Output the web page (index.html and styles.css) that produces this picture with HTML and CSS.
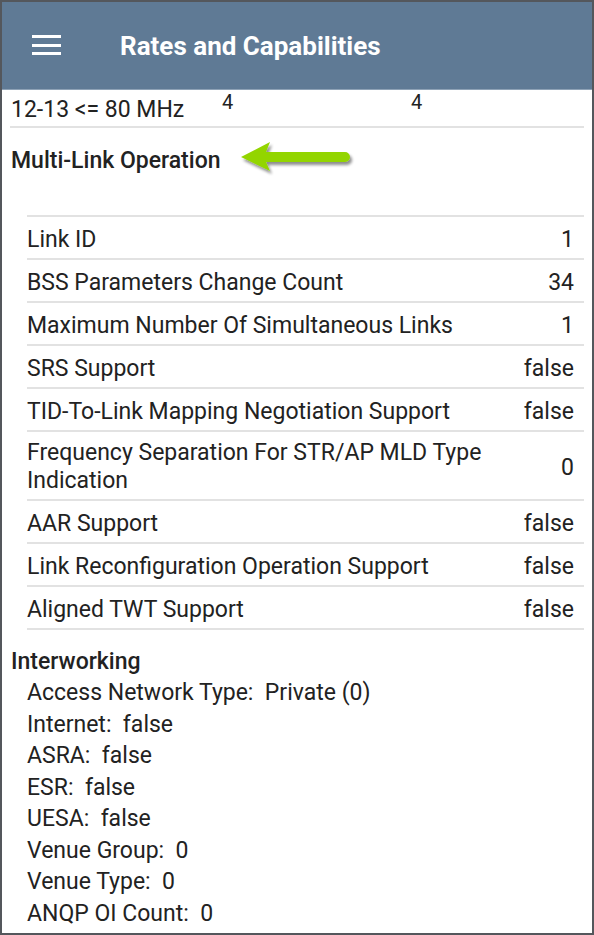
FILE: index.html
```html
<!DOCTYPE html>
<html>
<head>
<meta charset="utf-8">
<link rel="stylesheet" href="styles.css">
</head>
<body>
<div class="frame">
  <header class="appbar">
    <div class="menu"><span></span><span></span><span></span></div>
    <h1 class="title">Rates and Capabilities</h1>
  </header>
  <main class="content">
    <div class="clip-row">
      <span class="clip-label">12-13 &lt;= 80 MHz</span>
      <span class="clip-val">4</span>
      <span class="clip-val">4</span>
    </div>
    <div class="section-head">
      <span>Multi-Link Operation</span>
    </div>
    <div class="table">
      <div class="row"><span>Link ID</span><span>1</span></div>
      <div class="row"><span>BSS Parameters Change Count</span><span>34</span></div>
      <div class="row"><span>Maximum Number Of Simultaneous Links</span><span>1</span></div>
      <div class="row"><span>SRS Support</span><span>false</span></div>
      <div class="row"><span>TID-To-Link Mapping Negotiation Support</span><span>false</span></div>
      <div class="row tall"><span class="wrap">Frequency Separation For STR/AP MLD Type Indication</span><span>0</span></div>
      <div class="row"><span>AAR Support</span><span>false</span></div>
      <div class="row"><span>Link Reconfiguration Operation Support</span><span>false</span></div>
      <div class="row"><span>Aligned TWT Support</span><span>false</span></div>
    </div>
    <div class="inter">
      <div class="inter-head">Interworking</div>
      <ul class="kv">
        <li>Access Network Type:&nbsp; Private (0)</li>
        <li>Internet:&nbsp; false</li>
        <li>ASRA:&nbsp; false</li>
        <li>ESR:&nbsp; false</li>
        <li>UESA:&nbsp; false</li>
        <li>Venue Group:&nbsp; 0</li>
        <li>Venue Type:&nbsp; 0</li>
        <li>ANQP OI Count:&nbsp; 0</li>
      </ul>
    </div>
    <svg class="arrow" width="120" height="44" viewBox="0 0 120 44">
      <defs>
        <filter id="sh" x="-20%" y="-40%" width="140%" height="180%">
          <feGaussianBlur in="SourceAlpha" stdDeviation="1.5"/>
          <feOffset dx="2" dy="3" result="b"/>
          <feComponentTransfer><feFuncA type="linear" slope="0.45"/></feComponentTransfer>
          <feMerge><feMergeNode/><feMergeNode in="SourceGraphic"/></feMerge>
        </filter>
      </defs>
      <g filter="url(#sh)">
        <path d="M2 18 L31 3 L27 13 L106 13 A5 5 0 0 1 106 23 L27 23 L31 32 Z" fill="#93d500"/>
      </g>
    </svg>
  </main>
</div>
</body>
</html>
```

FILE: styles.css
```css
* { box-sizing: border-box; }
html, body { margin: 0; padding: 0; background: #fff; }
body { font-family: Roboto, "Noto Sans", sans-serif; color: #222; }
.frame {
  width: 594px;
  height: 935px;
  border: 2px solid #54575c;
  overflow: hidden;
  display: flex;
  flex-direction: column;
  background: #fff;
}
.appbar {
  height: 88px;
  flex: none;
  background: #5f7a95;
  display: flex;
  align-items: center;
  padding-left: 30px;
  border-bottom: 1px solid #8ea2b6;
  position: relative;
  z-index: 2;
}
.menu {
  width: 29px;
  display: flex;
  flex-direction: column;
  gap: 5.5px;
  margin-top: -1px;
}
.menu span { display: block; height: 3px; background: #fff; }
.title {
  margin: 0 0 0 59px;
  font-size: 26px;
  font-weight: 700;
  color: #fff;
  letter-spacing: 0;
}
.content {
  flex: 1;
  position: relative;
  overflow: hidden;
}
.clip-row {
  margin: 0 8px;
  height: 38px;
  border-bottom: 2px solid #e2e2e2;
  display: grid;
  grid-template-columns: 211px 189px auto;
  align-items: start;
  padding-left: 1px;
}
.clip-label {
  font-size: 23px;
  padding-top: 6px;
  color: #222;
}
.clip-val { font-size: 20px; line-height: 24px; color: #222; }
.section-head {
  padding: 19px 0 0 9px;
  height: 87px;
  font-size: 23px;
  font-weight: 500;
  color: #222;
}
.table { margin: 0 8px 0 25px; border-top: 2px solid #e2e2e2; }
.row {
  display: flex;
  justify-content: space-between;
  align-items: center;
  height: 43px;
  border-bottom: 2px solid #e2e2e2;
  padding: 3px 10px 0 0;
  font-size: 23px;
  color: #222;
}
.row.tall { height: 69px; }
.row .wrap { width: 480px; line-height: 28px; }
.inter { padding: 17px 0 0 9px; }
.inter-head { font-size: 23px; font-weight: 500; color: #222; line-height: 30px; }
.kv { list-style: none; margin: 0; padding: 0 0 0 16px; }
.kv li { font-size: 23px; line-height: 31.5px; color: #222; }
.arrow { position: absolute; left: 237px; top: 49px; }
```
